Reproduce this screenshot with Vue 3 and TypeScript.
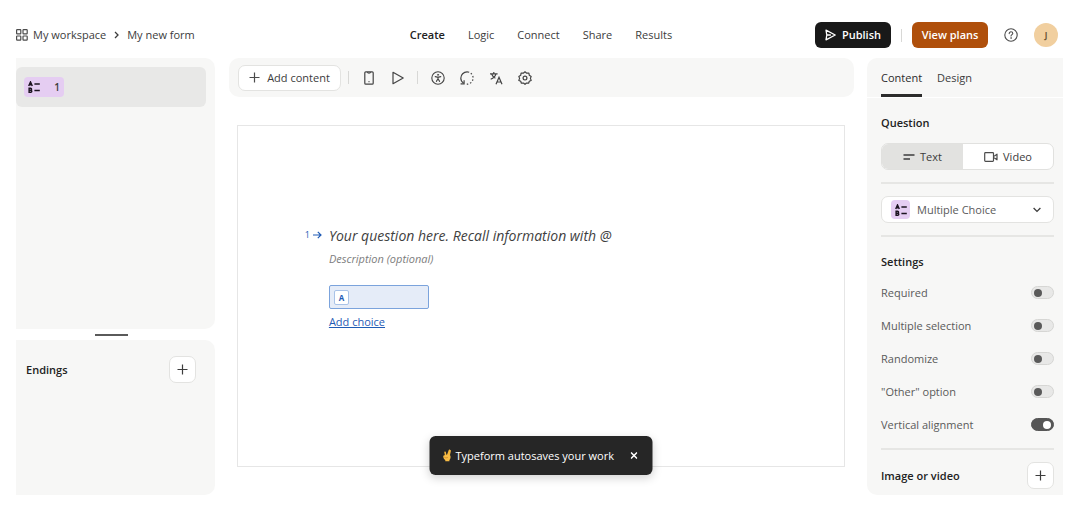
<script setup lang="ts">
import { ref, reactive } from 'vue'

interface Setting {
  id: string
  label: string
  on: boolean
}

const steps: string[] = ['Create', 'Logic', 'Connect', 'Share', 'Results']
const activeStep = ref('Create')

const panelTabs: string[] = ['Content', 'Design']
const activeTab = ref('Content')

const mediaMode = ref<'text' | 'video'>('text')
const questionType = ref('Multiple Choice')
const questionTitle = ref('')
const questionDescription = ref('')
const choice = ref('')
const toastOpen = ref(true)

const settings = reactive<Setting[]>([
  { id: 'required', label: 'Required', on: false },
  { id: 'multiple', label: 'Multiple selection', on: false },
  { id: 'randomize', label: 'Randomize', on: false },
  { id: 'other', label: '"Other" option', on: false },
  { id: 'vertical', label: 'Vertical alignment', on: true },
])
</script>

<template>
  <div class="app">
    <header class="topbar">
      <nav class="crumbs" aria-label="Breadcrumb">
        <svg class="grid-icon" width="12" height="12" viewBox="0 0 12 12" fill="none" stroke="#4c4c4c" stroke-width="1.2">
          <rect x="0.6" y="0.6" width="4.2" height="4.2" rx="0.6" />
          <rect x="7" y="0.6" width="4.2" height="4.2" rx="0.6" />
          <rect x="0.6" y="7" width="4.2" height="4.2" rx="0.6" />
          <rect x="7" y="7" width="4.2" height="4.2" rx="0.6" />
        </svg>
        <a href="#workspace">My workspace</a>
        <svg class="crumb-sep" width="5" height="8" viewBox="0 0 5 8" fill="none" stroke="#3c3c3c" stroke-width="1.3">
          <path d="M1 1l3 3-3 3" />
        </svg>
        <a href="#form">My new form</a>
      </nav>

      <nav class="steps" aria-label="Form steps">
        <a
          v-for="step in steps"
          :key="step"
          :href="'#' + step.toLowerCase()"
          :class="{ active: step === activeStep }"
          @click.prevent="activeStep = step"
        >{{ step }}</a>
      </nav>

      <div class="actions">
        <button class="btn dark" type="button">
          <svg width="11" height="12" viewBox="0 0 11 12" fill="none" stroke="#fff" stroke-width="1.3" stroke-linejoin="round" stroke-linecap="round">
            <path d="M1 1.2L10.2 6 1 10.8 1.8 6zM1.8 6h3.6" />
          </svg>
          Publish
        </button>
        <span class="rule"></span>
        <button class="btn orange" type="button">View plans</button>
        <button class="help" type="button" aria-label="Help">
          <svg width="14" height="14" viewBox="0 0 14 14" fill="none" stroke="#4c4c4c" stroke-width="1.1" stroke-linecap="round">
            <circle cx="7" cy="7" r="6.2" />
            <path d="M5.2 5.6c0-1.1.8-1.8 1.8-1.8s1.8.7 1.8 1.6c0 1.2-1.8 1.3-1.8 2.6" />
            <circle cx="7" cy="10" r="0.4" fill="#4c4c4c" stroke-width="0.6" />
          </svg>
        </button>
        <button class="avatar" type="button" aria-label="Account">J</button>
      </div>
    </header>

    <main class="workspace">
      <aside class="left">
        <section class="panel questions">
          <button class="question-item" type="button">
            <span class="badge">
              <svg width="12" height="12" viewBox="0 0 12 12" fill="none" stroke="#1c1420" stroke-width="1.4">
                <path d="M0.7 5L2.5 0.9 4.3 5M1.4 3.8h2.2" />
                <path d="M1.1 7.3v4h1.7a1 1 0 0 0 0-2H1.1h1.5a1 1 0 0 0 0-2z" />
                <path d="M6.4 3h5.4M6.4 9.5h5.4" stroke-width="1.3" />
              </svg>
              <span>1</span>
            </span>
          </button>
        </section>
        <div class="handle"><span></span></div>
        <section class="panel endings">
          <h2>Endings</h2>
          <button class="square" type="button" aria-label="Add ending">
            <svg width="11" height="11" viewBox="0 0 11 11" stroke="#3c3c3c" stroke-width="1.2"><path d="M5.5 0.5v10M0.5 5.5h10" /></svg>
          </button>
        </section>
      </aside>

      <section class="center">
        <div class="toolbar">
          <button class="add" type="button">
            <svg width="11" height="11" viewBox="0 0 11 11" stroke="#4c4c4c" stroke-width="1.2"><path d="M5.5 0.5v10M0.5 5.5h10" /></svg>
            Add content
          </button>
          <span class="rule first"></span>
          <button class="tool" type="button" aria-label="Mobile preview">
            <svg width="14" height="14" viewBox="0 0 14 14" fill="none" stroke="#444" stroke-width="1.2">
              <rect x="2.8" y="0.8" width="8.4" height="12.4" rx="1" />
              <path d="M5.4 1.2c.2.9.6 1 1.6 1s1.4-.1 1.6-1M6.5 10.6h1" />
            </svg>
          </button>
          <button class="tool" type="button" aria-label="Play preview">
            <svg width="14" height="14" viewBox="0 0 14 14" fill="none" stroke="#444" stroke-width="1.2" stroke-linejoin="round">
              <path d="M2 1.3L12.2 7 2 12.7z" />
            </svg>
          </button>
          <span class="rule"></span>
          <button class="tool" type="button" aria-label="Accessibility">
            <svg width="14" height="14" viewBox="0 0 14 14" fill="none" stroke="#444" stroke-width="1.1" stroke-linecap="round">
              <circle cx="7" cy="7" r="6.2" />
              <circle cx="7" cy="3.8" r="0.6" fill="#444" stroke-width="0.6" />
              <path d="M4.2 5.6l2 .5h1.6l2-.5M7 6.2v1.6M5.4 10.4L7 7.8l1.6 2.6" />
            </svg>
          </button>
          <button class="tool" type="button" aria-label="Version history">
            <svg width="14" height="14" viewBox="0 0 14 14" fill="none" stroke="#444" stroke-width="1.2">
              <path d="M3.6 12C1.8 10.9.8 9.2.8 7.2.8 3.6 3.6.9 7.1.9c.8 0 1.5.1 2.1.3" />
              <path d="M0.6 12.8h3.5V9.3" />
              <path d="M10.8 2.2a6.2 6.2 0 0 1-4 11" stroke-dasharray="1.5 1.9" />
            </svg>
          </button>
          <button class="tool" type="button" aria-label="Translate">
            <svg width="14" height="14" viewBox="0 0 14 14" fill="none" stroke="#444" stroke-width="1.2">
              <path d="M1 2.9h7.6M4.8 1v1.9M7 2.9C6.4 5.2 4.3 7.2 1.7 8.2M2.7 3.2C3.4 5 4.7 6.4 6.4 7.2" />
              <path d="M7 13.2l3-7 3 7M8 11h4" />
            </svg>
          </button>
          <button class="tool" type="button" aria-label="Settings">
            <svg width="14" height="14" viewBox="0 0 14 14" fill="none" stroke="#444" stroke-width="1.2" stroke-linejoin="round">
              <path d="M7 .8L8.7 2.2 10.9 2.1 11.3 4.3 13.2 5.4 12.4 7.4 13.2 9.4 11.3 10.2 10.6 12.2 8.5 12 7 13.3 5.5 12 3.4 12.2 2.7 10.2 .8 9.4 1.6 7.4 .8 5.4 2.7 4.3 3.1 2.1 5.3 2.2z" />
              <circle cx="7" cy="7.1" r="1.9" />
            </svg>
          </button>
        </div>

        <div class="canvas">
          <div class="question">
            <span class="number">
              1
              <svg width="9" height="8" viewBox="0 0 9 8" fill="none" stroke="#1f5bb5" stroke-width="1.2"><path d="M0 4h8M4.8.8L8 4 4.8 7.2" /></svg>
            </span>
            <div class="fields">
              <input v-model="questionTitle" class="title" type="text" aria-label="Question" placeholder="Your question here. Recall information with @" />
              <input v-model="questionDescription" class="description" type="text" aria-label="Description" placeholder="Description (optional)" />
              <label class="choice">
                <span class="key">A</span>
                <input v-model="choice" type="text" aria-label="Choice A" />
              </label>
              <a class="add-choice" href="#add-choice">Add choice</a>
            </div>
          </div>
        </div>

        <div v-if="toastOpen" class="toast" role="status">
          <svg width="9" height="13" viewBox="0 0 9 13">
            <path d="M3.2 6.4L2.6 3.4M5.2 6.2L7 1.2M6.6 6.2L7.6 1.8" stroke="#f6b73c" stroke-width="1.6" stroke-linecap="round" />
            <path d="M.8 6.8C1.8 5.6 6.6 5.2 7.8 6.4c.6 1.6.2 3.7-.9 4.7v1.2H2.8v-1.1C1.4 10.3.5 8.2.8 6.8z" fill="#f9bd45" />
            <path d="M1.8 8.2c1.2.8 2.6.8 3.6.2" stroke="#c9822a" stroke-width=".7" fill="none" />
          </svg>
          <span>Typeform autosaves your work</span>
          <button type="button" aria-label="Close" @click="toastOpen = false">
            <svg width="7" height="7" viewBox="0 0 7 7" stroke="#fff" stroke-width="1.5"><path d="M.5.5l6 6M6.5.5l-6 6" /></svg>
          </button>
        </div>
      </section>

      <aside class="panel right">
        <div class="tabs" role="tablist">
          <button
            v-for="tab in panelTabs"
            :key="tab"
            type="button"
            role="tab"
            :aria-selected="tab === activeTab"
            :class="{ active: tab === activeTab }"
            @click="activeTab = tab"
          >{{ tab }}</button>
        </div>

        <div class="body">
          <h2>Question</h2>
          <div class="segmented">
            <button type="button" :class="{ active: mediaMode === 'text' }" :aria-pressed="mediaMode === 'text'" @click="mediaMode = 'text'">
              <svg width="12" height="8" viewBox="0 0 12 8" stroke="#3c3c3c" stroke-width="1.3"><path d="M0.5 2h11M0.5 6h6.5" /></svg>
              Text
            </button>
            <button type="button" :class="{ active: mediaMode === 'video' }" :aria-pressed="mediaMode === 'video'" @click="mediaMode = 'video'">
              <svg width="14" height="10" viewBox="0 0 14 10" fill="none" stroke="#4c4c4c" stroke-width="1.2" stroke-linejoin="round">
                <rect x="0.7" y="0.7" width="8.8" height="8.6" rx="0.8" />
                <path d="M9.5 4h1l2.5-1.8v5.6L10.5 6h-1" />
              </svg>
              Video
            </button>
          </div>
          <hr />
          <label class="select">
            <span class="badge small">
              <svg width="12" height="12" viewBox="0 0 12 12" fill="none" stroke="#1c1420" stroke-width="1.4">
                <path d="M0.7 5L2.5 0.9 4.3 5M1.4 3.8h2.2" />
                <path d="M1.1 7.3v4h1.7a1 1 0 0 0 0-2H1.1h1.5a1 1 0 0 0 0-2z" />
                <path d="M6.4 3h5.4M6.4 9.5h5.4" stroke-width="1.3" />
              </svg>
            </span>
            <select v-model="questionType" aria-label="Question type">
              <option>Multiple Choice</option>
            </select>
            <svg class="chevron" width="8" height="6" viewBox="0 0 8 6" fill="none" stroke="#3c3c3c" stroke-width="1.3"><path d="M.6 1L4 4.4 7.4 1" /></svg>
          </label>
          <hr />
          <h2 class="settings-title">Settings</h2>
          <div class="settings">
            <label v-for="item in settings" :key="item.id" class="setting">
              <span>{{ item.label }}</span>
              <input v-model="item.on" type="checkbox" role="switch" />
            </label>
          </div>
          <hr class="last" />
          <div class="media">
            <h2>Image or video</h2>
            <button class="square" type="button" aria-label="Add image or video">
              <svg width="11" height="11" viewBox="0 0 11 11" stroke="#3c3c3c" stroke-width="1.2"><path d="M5.5 0.5v10M0.5 5.5h10" /></svg>
            </button>
          </div>
        </div>
      </aside>
    </main>
  </div>
</template>

<style>
body {
  margin: 0;
  background: #fff;
}
</style>

<style scoped>
* {
  box-sizing: border-box;
}

.app {
  padding: 13px 17px 33px 16px;
  font-family: 'Open Sans', 'Noto Sans', sans-serif;
  font-size: 11px;
  line-height: 20px;
  color: #3c3c3c;
}

button,
input,
select {
  font: inherit;
  color: inherit;
  margin: 0;
  padding: 0;
  border: 0;
  background: none;
}

button {
  display: flex;
  align-items: center;
  justify-content: center;
  cursor: pointer;
  white-space: nowrap;
}

a {
  color: inherit;
  text-decoration: none;
}

svg {
  flex: none;
}

h2 {
  margin: 0;
  font-size: 11px;
  font-weight: 600;
  line-height: 20px;
  color: #222;
}

.topbar {
  display: grid;
  grid-template-columns: 1fr auto 1fr;
  align-items: center;
  height: 44px;
  margin-bottom: 1px;
  font-weight: 500;
}

.crumbs {
  display: flex;
  align-items: center;
}

.grid-icon {
  margin-right: 5px;
}

.crumb-sep {
  margin: 0 8px;
}

.steps {
  display: flex;
  gap: 23px;
  padding-left: 3px;
}

.steps .active {
  font-weight: 600;
  color: #222;
}

.actions {
  display: flex;
  align-items: center;
  justify-content: flex-end;
  padding-right: 5px;
}

.btn {
  height: 26px;
  border-radius: 6px;
  font-weight: 600;
  color: #fff;
}

.dark {
  gap: 6px;
  width: 76px;
  background: #191919;
}

.orange {
  width: 76px;
  background: #af4f0b;
}

.rule {
  width: 1px;
  height: 13px;
  background: #d8d8d6;
}

.actions .rule {
  margin: 0 10px;
}

.help {
  margin: 0 16px;
}

.avatar {
  width: 24px;
  height: 24px;
  border-radius: 50%;
  background: #f1cf9f;
  font-size: 8px;
  font-weight: 700;
  color: #6b5636;
}

.workspace {
  display: grid;
  grid-template-columns: 199px 1fr 196px;
  gap: 13px;
}

.panel {
  background: #f7f7f6;
}

.left {
  display: grid;
  grid-template-rows: 7fr 11px 4fr;
}

.left .panel {
  border-radius: 0 10px 10px 0;
}

.questions {
  padding: 9px 9px 0 0;
}

.question-item {
  width: 100%;
  height: 40px;
  padding: 0 8px;
  justify-content: flex-start;
  border-radius: 6px;
  background: #e8e8e7;
}

.badge {
  display: flex;
  align-items: center;
  justify-content: space-between;
  width: 40px;
  height: 20px;
  padding: 0 4px;
  border-radius: 4px;
  background: #e5cdf2;
  font-size: 10px;
  font-weight: 600;
}

.badge.small {
  width: 19px;
  height: 19px;
  flex: none;
  padding: 0;
  justify-content: center;
}

.handle {
  display: flex;
  align-items: center;
  justify-content: center;
}

.handle span {
  width: 33px;
  height: 2px;
  margin-right: 9px;
  background: #5a5a5a;
}

.endings {
  display: flex;
  align-items: flex-start;
  justify-content: space-between;
  padding: 16px 19px 0 10px;
}

.endings h2 {
  line-height: 27px;
}

.square {
  width: 27px;
  height: 27px;
  border: 1px solid #e3e3e1;
  border-radius: 7px;
  background: #fff;
}

.center {
  position: relative;
  min-width: 0;
  padding-left: 1px;
}

.toolbar {
  display: flex;
  align-items: center;
  height: 39px;
  padding: 0 9px;
  border-radius: 10px;
  background: #f7f7f6;
}

.add {
  gap: 7px;
  width: 103px;
  height: 26px;
  border: 1px solid #e3e3e1;
  border-radius: 7px;
  background: #fff;
  font-weight: 500;
}

.toolbar .rule {
  margin: 0 5px;
}

.toolbar .rule.first {
  margin: 0 5px 0 7px;
}

.tool {
  width: 29px;
  height: 26px;
}

.canvas {
  aspect-ratio: 16 / 9;
  margin: 28px 9px 0 8px;
  padding-top: 98px;
  border: 1px solid #e6e6e6;
}

.question {
  display: grid;
  grid-template-columns: 15% 1fr;
}

.number {
  display: flex;
  align-items: center;
  justify-content: flex-end;
  gap: 3px;
  height: 22px;
  padding-right: 7px;
  font-size: 9px;
  color: #1f5bb5;
}

.fields {
  display: flex;
  flex-direction: column;
  align-items: flex-start;
}

.title,
.description {
  width: 80%;
  outline: none;
  font-style: italic;
}

.title {
  height: 22px;
  font-size: 14px;
}

.description {
  height: 20px;
  margin-top: 3px;
}

.title::placeholder {
  color: #3f3f3f;
  opacity: 1;
}

.description::placeholder {
  color: #7d7d7d;
  opacity: 1;
}

.choice {
  display: flex;
  align-items: center;
  gap: 6px;
  width: 100px;
  height: 24px;
  margin-top: 16px;
  padding: 0 6px 0 4px;
  border: 1px solid #7ba3dc;
  border-radius: 2px;
  background: #e5ecf8;
}

.key {
  flex: none;
  width: 15px;
  height: 15px;
  border: 1px solid #a9c3e8;
  border-radius: 2px;
  background: #fff;
  font-size: 8px;
  font-weight: 700;
  line-height: 13px;
  text-align: center;
  color: #1f5bb5;
}

.choice input {
  width: 100%;
  min-width: 0;
  outline: none;
}

.add-choice {
  margin-top: 3px;
  color: #1f5bb5;
  text-decoration: underline;
}

.toast {
  position: absolute;
  bottom: 20px;
  left: 50%;
  transform: translateX(-50%);
  display: flex;
  align-items: center;
  gap: 4px;
  width: 223px;
  height: 39px;
  padding: 0 15px 0 13px;
  border-radius: 6px;
  background: #262626;
  box-shadow: 0 3px 10px rgba(0, 0, 0, 0.18);
  color: #fff;
  white-space: nowrap;
}

.toast button {
  margin-left: auto;
}

.right {
  border-radius: 10px 0 0 10px;
}

.tabs {
  display: flex;
  gap: 15px;
  height: 40px;
  padding: 0 14px;
  border-bottom: 1px solid #fff;
  font-weight: 500;
}

.tabs button {
  border-top: 3px solid transparent;
  border-bottom: 3px solid transparent;
}

.tabs .active {
  border-bottom-color: #2c2c2c;
  color: #2c2c2c;
}

.body {
  padding: 15px 9px 6px 14px;
}

.segmented {
  display: grid;
  grid-template-columns: 81px 1fr;
  height: 27px;
  margin-top: 10px;
  border: 1px solid #e1e1df;
  border-radius: 7px;
  background: #fff;
  overflow: hidden;
}

.segmented button {
  gap: 5px;
}

.segmented .active {
  background: #e2e2e0;
}

hr {
  height: 2px;
  margin: 12px 0;
  border: 0;
  background: #e6e6e4;
}

.select {
  display: flex;
  align-items: center;
  gap: 7px;
  height: 27px;
  padding: 0 12px 0 9px;
  border: 1px solid #e3e3e1;
  border-radius: 7px;
  background: #fff;
}

.select select {
  flex: 1;
  min-width: 0;
  height: 25px;
  appearance: none;
  outline: none;
  color: #5a5a5a;
}

.settings-title {
  margin-top: 15px;
}

.settings {
  margin-top: 4px;
}

.setting {
  display: flex;
  align-items: center;
  justify-content: space-between;
  height: 33px;
  color: #5a5a5a;
}

.setting input {
  appearance: none;
  display: flex;
  align-items: center;
  width: 23px;
  height: 13px;
  padding: 0 2px;
  border: 1px solid #d6d6d4;
  border-radius: 7px;
  background: #e8e8e7;
}

.setting input::before {
  content: '';
  width: 8px;
  height: 8px;
  border-radius: 50%;
  background: #5a5a5a;
}

.setting input:checked {
  justify-content: flex-end;
  border-color: #565656;
  background: #565656;
}

.setting input:checked::before {
  background: #fff;
}

hr.last {
  margin-top: 7px;
}

.media {
  display: flex;
  align-items: center;
  justify-content: space-between;
}
</style>
